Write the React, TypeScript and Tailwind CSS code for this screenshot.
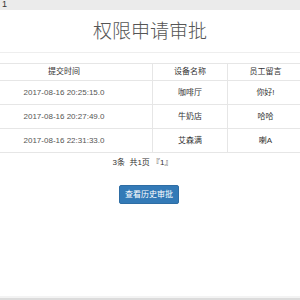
import React from 'react';

interface Row {
  time: string;
  device: string;
  note: string;
}

const rows: Row[] = [
  { time: '2017-08-16 20:25:15.0', device: '咖啡厅', note: '你好!' },
  { time: '2017-08-16 20:27:49.0', device: '牛奶店', note: '哈哈' },
  { time: '2017-08-16 22:31:33.0', device: '艾森满', note: '喇A' },
];

const font = { fontFamily: '"Liberation Sans", "Noto Sans CJK SC", sans-serif' };

const App = () => {
  return (
    <div className="w-[300px] h-[300px] overflow-hidden bg-white text-[#333] flex flex-col" style={font}>
      <div className="h-[10px] bg-[#ebebeb] text-[9px] leading-[8px] pl-[2px] overflow-hidden">1</div>

      <div className="h-[43px] border-b border-[#eee] flex items-center justify-center">
        <h1 className="text-[19px] leading-none font-light text-[#555] pt-[1px]">权限申请审批</h1>
      </div>

      <div className="mt-[10px] -ml-[24px] w-[327px]">
        <div className="grid grid-cols-[176px_75px_76px] text-[8px] border-t border-[#e6e6e6]">
          <div className="h-[17px] flex items-center justify-center border-b border-[#e6e6e6]">提交时间</div>
          <div className="h-[17px] flex items-center justify-center border-b border-l border-[#e6e6e6]">设备名称</div>
          <div className="h-[17px] flex items-center justify-center border-b border-l border-[#e6e6e6]">员工留言</div>
          {rows.map((r) => (
            <React.Fragment key={r.time}>
              <div className="h-[24px] flex items-center justify-center border-b border-[#e6e6e6] text-[#555]">{r.time}</div>
              <div className="h-[24px] flex items-center justify-center border-b border-l border-[#e6e6e6]">{r.device}</div>
              <div className="h-[24px] flex items-center justify-center border-b border-l border-[#e6e6e6]">{r.note}</div>
            </React.Fragment>
          ))}
        </div>

        <div className="mt-[5px] text-[8px] leading-[10px] text-center pl-[6px]">3条&nbsp; 共1页 『1』</div>
      </div>

      <div className="mt-[17px] flex justify-center">
        <button className="w-[60px] h-[19px] rounded-[2px] bg-[#337ab7] border border-[#2e6da4] text-white text-[8px] leading-none -ml-[2px]">
          查看历史审批
        </button>
      </div>

      <div className="flex-1" />
      <div className="h-[4px] bg-[#f3f3f3] border-b-2 border-[#dcdcdc]" />
    </div>
  );
};

export default App;
